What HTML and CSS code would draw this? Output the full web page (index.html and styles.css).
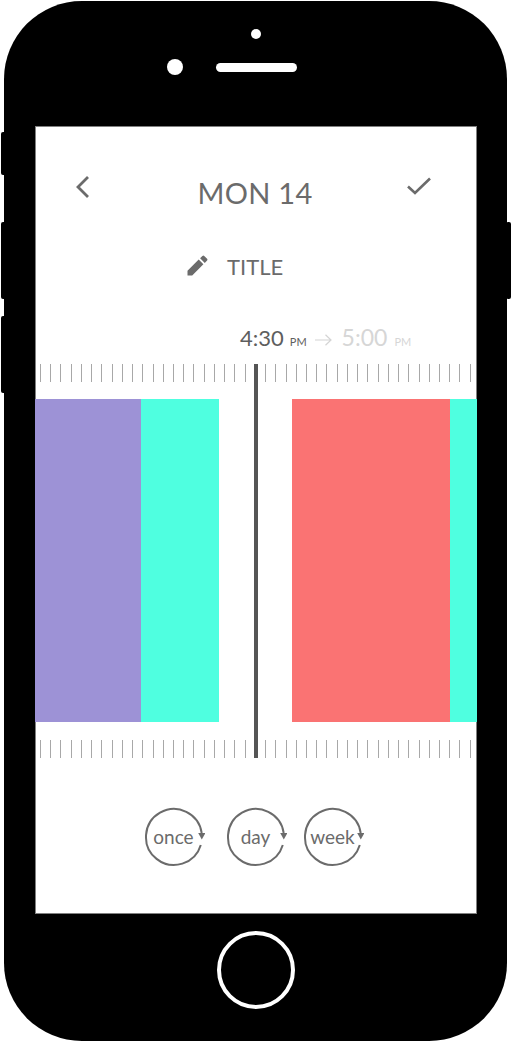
FILE: index.html
```html
<!DOCTYPE html>
<html lang="en">
<head>
    <meta charset="UTF-8">
    <title>Mon 14</title>
    <link rel="stylesheet" href="styles.css">
</head>
<body>
    <div class="phone">
        <span class="side-btn mute"></span>
        <span class="side-btn vol-up"></span>
        <span class="side-btn vol-down"></span>
        <span class="side-btn power"></span>

        <div class="sensor"></div>
        <div class="earpiece">
            <span class="camera"></span>
            <span class="speaker"></span>
        </div>

        <div class="screen">
            <div class="header">
                <svg class="icon-back" width="16" height="24" viewBox="0 0 16 24">
                    <path d="M13 2 L3 12 L13 22" fill="none" stroke="#6b6b6b" stroke-width="2.8"/>
                </svg>
                <h1>MON 14</h1>
                <svg class="icon-check" width="24" height="18" viewBox="0 0 24 18">
                    <path d="M1 9.5 L8 16 L23 1.5" fill="none" stroke="#6b6b6b" stroke-width="2.6"/>
                </svg>
            </div>

            <div class="title-row">
                <svg width="22" height="22" viewBox="0 0 22 22">
                    <path d="M0.5 16.8 V21.5 H5.2 L16.4 10.3 L11.7 5.6 Z M20.1 6.6 a1.3 1.3 0 0 0 0 -1.8 L17.2 1.9 a1.3 1.3 0 0 0 -1.8 0 L13.1 4.2 L17.8 8.9 Z" fill="#6b6b6b"/>
                </svg>
                <span class="title">TITLE</span>
            </div>

            <div class="time-row">
                <span class="time">4:30</span><span class="ampm">PM</span>
                <svg class="arrow" width="17" height="12" viewBox="0 0 17 12">
                    <path d="M0 6 H16 M10.5 0.8 L16 6 L10.5 11.2" fill="none" stroke="#d4d4d4" stroke-width="1.2"/>
                </svg>
                <span class="time muted">5:00</span><span class="ampm muted">PM</span>
            </div>

            <div class="timeline">
                <div class="ticks"></div>
                <div class="blocks">
                    <div class="block purple"></div>
                    <div class="block teal-a"></div>
                    <div class="block gap"></div>
                    <div class="block red"></div>
                    <div class="block teal-b"></div>
                </div>
                <div class="ticks"></div>
                <div class="needle"></div>
            </div>

            <div class="repeat-row">
                <div class="repeat r-once">
                    <svg width="62" height="62" viewBox="0 0 62 62">
                        <path d="M58.7 27 A28 28 0 1 0 57.8 39" fill="none" stroke="#6b6b6b" stroke-width="2"/>
                        <path d="M55.2 27 H62.4 L58.8 33.5 Z" fill="#6b6b6b"/>
                    </svg>
                    <span>once</span>
                </div>
                <div class="repeat r-day">
                    <svg width="62" height="62" viewBox="0 0 62 62">
                        <path d="M58.7 27 A28 28 0 1 0 57.8 39" fill="none" stroke="#6b6b6b" stroke-width="2"/>
                        <path d="M55.2 27 H62.4 L58.8 33.5 Z" fill="#6b6b6b"/>
                    </svg>
                    <span>day</span>
                </div>
                <div class="repeat r-week">
                    <svg width="62" height="62" viewBox="0 0 62 62">
                        <path d="M58.7 27 A28 28 0 1 0 57.8 39" fill="none" stroke="#6b6b6b" stroke-width="2"/>
                        <path d="M55.2 27 H62.4 L58.8 33.5 Z" fill="#6b6b6b"/>
                    </svg>
                    <span>week</span>
                </div>
            </div>
        </div>

        <div class="home-btn"></div>
    </div>
</body>
</html>
```

FILE: styles.css
```css
body {
    margin: 0;
    background: #fff;
    font-family: 'Lato', sans-serif;
    color: #6b6b6b;
}

.phone {
    position: relative;
    width: 503px;
    height: 1040px;
    margin: 1px 0 0 4px;
    padding-top: 28px;
    box-sizing: border-box;
    background: #000;
    border-radius: 78px;
    display: flex;
    flex-direction: column;
    align-items: center;
}

.side-btn {
    position: absolute;
    width: 5px;
    background: #000;
    border-radius: 2px;
}

.mute { left: -3px; top: 131px; height: 43px; }
.vol-up { left: -3px; top: 221px; height: 77px; }
.vol-down { left: -3px; top: 315px; height: 77px; }
.power { right: -4px; top: 221px; height: 77px; }

.sensor {
    width: 10px;
    height: 10px;
    margin-left: 1px;
    background: #fff;
    border-radius: 50%;
}

.earpiece {
    width: 100%;
    margin-top: 20px;
    padding-left: 2px;
    box-sizing: border-box;
    display: grid;
    grid-template-columns: 1fr 81px 1fr;
    column-gap: 33px;
    align-items: center;
}

.camera {
    justify-self: end;
    width: 16px;
    height: 16px;
    background: #fff;
    border-radius: 50%;
}

.speaker {
    height: 9px;
    background: #fff;
    border-radius: 5px;
}

.screen {
    width: 442px;
    height: 788px;
    margin-top: 51px;
    margin-left: 1px;
    box-sizing: border-box;
    background: #fff;
    border: 1px solid #808080;
    display: flex;
    flex-direction: column;
}

.header {
    height: 73px;
    padding: 0 45px 0 39px;
    display: flex;
    justify-content: space-between;
    align-items: flex-start;
}

.icon-back { margin-top: 48px; }
.icon-check { margin-top: 50px; }

h1 {
    margin: 46px 0 0 12px;
    font-size: 29px;
    line-height: 40px;
    font-weight: 400;
    letter-spacing: 0.3px;
}

.title-row {
    height: 79px;
    margin-top: 44px;
    padding-left: 151px;
    display: flex;
    align-items: flex-start;
    gap: 18px;
}

.title {
    font-size: 22px;
    line-height: 28px;
    margin-top: 9px;
}

.title-row svg { margin-top: 10px; }

.time-row {
    height: 30px;
    margin-top: -1px;
    padding-left: 204px;
    display: flex;
    align-items: baseline;
}

.time {
    font-size: 22px;
    line-height: 30px;
    color: #5e5e5e;
}

.ampm {
    font-size: 11px;
    margin-left: 6px;
    color: #5e5e5e;
}

.arrow { margin: 0 10px 0 8px; }

.time.muted { color: #d6d6d6; font-size: 23px; }
.ampm.muted { color: #d6d6d6; margin-left: 7px; }

.timeline {
    position: relative;
    margin-top: 12px;
    display: flex;
    flex-direction: column;
}

.ticks {
    height: 18px;
    margin-left: 4px;
    width: 434px;
    background: repeating-linear-gradient(to right, #a8a8a8 0, #a8a8a8 1px, transparent 1px, transparent 10.23px);
}

.blocks {
    height: 323px;
    margin: 17px -1px 18px;
    display: flex;
}

.block { height: 100%; }
.purple { width: 106px; background: #9d92d6; }
.teal-a { width: 78px; background: #4fffe0; }
.gap { width: 73px; }
.red { width: 158px; background: #fa7373; }
.teal-b { width: 27px; background: #4fffe0; }

.needle {
    position: absolute;
    left: 218px;
    top: 0;
    width: 4px;
    height: 394px;
    background: #555;
}

.repeat-row {
    margin-top: 48px;
    padding-left: 107px;
    display: flex;
    gap: 20px;
}

.repeat {
    position: relative;
    width: 62px;
    height: 62px;
    display: flex;
    align-items: center;
    justify-content: center;
    font-size: 19px;
}

.repeat span { margin: -2px 1px 0 0; }

.r-week { margin-left: -5px; }

.repeat svg {
    position: absolute;
    left: 0;
    top: 0;
}

.home-btn {
    width: 70px;
    height: 70px;
    margin-top: 17px;
    border: 4px solid #fff;
    border-radius: 50%;
}
```
